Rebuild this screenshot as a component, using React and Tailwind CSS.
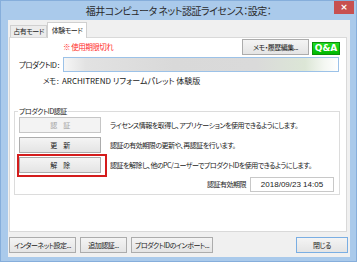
export default function App() {
  const btn =
    "border border-[#acacac] bg-[linear-gradient(#f4f4f4,#e4e4e4)] flex items-center justify-center text-[#1a1a1a]";
  return (
    <div className="w-[357px] h-[262px] bg-[#aacaeb] border border-[#86aedb] flex flex-col font-['Noto_Sans_CJK_JP',sans-serif] [font-feature-settings:'palt'] text-[7px] tracking-[-0.5px] text-[#1a1a1a] leading-none overflow-hidden">
      {/* title bar */}
      <div className="h-[19px] flex items-start shrink-0">
        <div className="flex-1" />
        <div className="text-[10px] tracking-[-0.5px] text-[#2b2b2b] mt-[5px] whitespace-nowrap">
          福井コンピュータ ネット認証ライセンス：設定：
        </div>
        <div className="flex-1 flex justify-end">
          <div className="w-[20px] h-[13px] bg-[#c75050] mr-[2px] flex items-center justify-center text-white text-[9px] tracking-normal font-bold font-['DejaVu_Sans',sans-serif]">
            ×
          </div>
        </div>
      </div>

      {/* client */}
      <div className="ml-[7px] mr-[6px] mb-[4px] flex-1 bg-[#f0f0f0] flex flex-col">
        {/* tabs */}
        <div className="h-[17px] flex items-end pl-[2px] shrink-0">
          <div className="w-[37px] h-[12px] border border-b-0 border-[#d0d0d0] bg-[#ececec] flex items-center justify-center whitespace-nowrap">
            占有モード
          </div>
          <div className="w-[40px] h-[16px] border border-b-0 border-[#d0d0d0] bg-white -mb-[1px] relative z-10 flex items-center justify-center whitespace-nowrap">
            体験モード
          </div>
        </div>

        {/* panel */}
        <div className="ml-[1px] mr-[3px] h-[195px] border border-[#d9d9d9] bg-white flex flex-col">
          {/* row 1 */}
          <div className="flex items-center h-[16px] mt-[1px] pl-[53px] pr-[6px]">
            <span className="text-[#ff2a2a] text-[7.5px]">※ 使用期限切れ</span>
            <div className="ml-auto flex items-center gap-[3px]">
              <div className={`${btn} w-[67px] h-[16px] whitespace-nowrap`}>メモ・履歴編集...</div>
              <div className="w-[28px] h-[13px] mt-[2px] border border-[#0b8f0b] bg-[linear-gradient(#22dd22,#00b800)] text-white font-bold text-[9px] tracking-normal flex items-center justify-center font-['DejaVu_Sans',sans-serif]">
                Q&amp;A
              </div>
            </div>
          </div>

          {/* row 2 */}
          <div className="flex items-center h-[15px] mt-[2px] pl-[9px]">
            <div className="w-[44px] whitespace-nowrap text-[7.5px]">プロダクトID :</div>
            <div className="w-[276px] h-[15px] border border-[#9cc2e8] bg-[linear-gradient(90deg,#f6f6f6_0%,#e2e2e2_8%,#d9d9d9_40%,#dadada_70%,#dce6d6_88%,#f4f7f2_95%,#ffffff_100%)]" />
          </div>

          {/* row 3 */}
          <div className="flex items-center h-[10px] mt-[4px] pl-[33px] whitespace-nowrap">
            <span className="w-[19px] shrink-0 text-[7.5px]">メモ :</span>
            <span className="text-[8px] tracking-normal">ARCHITREND リフォームパレット 体験版</span>
          </div>

          {/* group */}
          <fieldset className="mt-[20px] ml-[4px] w-[326px] border border-[#dcdcdc] pl-[4px] pr-[5px] pb-[2px]">
            <legend className="leading-[10px] px-[1px] -ml-[1px] whitespace-nowrap">プロダクトID認証</legend>
            <div className="flex flex-col gap-[4px] pt-[1px]">
              <div className="flex items-center gap-[9px]">
                <div className="w-[82px] h-[16px] border border-[#c6c6c6] bg-[#f3f3f3] flex items-center justify-center text-[#a3a3a3]">
                  認　証
                </div>
                <span className="whitespace-nowrap">ライセンス情報を取得し、アプリケーションを使用できるようにします。</span>
              </div>
              <div className="flex items-center gap-[9px]">
                <div className={`${btn} w-[82px] h-[16px]`}>更　新</div>
                <span className="whitespace-nowrap">認証の有効期限の更新や、再認証を行います。</span>
              </div>
              <div className="flex items-center gap-[9px]">
                <div className="relative">
                  <div className={`${btn} w-[82px] h-[16px]`}>解　除</div>
                  <div className="absolute -left-[2px] -top-[3px] w-[90px] h-[23px] border-2 border-[#d41c1c]" />
                </div>
                <span className="whitespace-nowrap">認証を解除し、他のPC/ユーザーでプロダクトIDを使用できるようにします。</span>
              </div>
              <div className="flex items-center justify-end gap-[4px] h-[15px]">
                <span className="whitespace-nowrap">認証有効期限</span>
                <div className="w-[84px] h-[15px] border border-[#c8c8c8] bg-white flex items-center justify-center font-['Liberation_Sans',sans-serif] text-[8px] tracking-normal">
                  2018/09/23 14:05
                </div>
              </div>
            </div>
          </fieldset>
        </div>

        {/* bottom buttons */}
        <div className="flex items-center mt-[5px] pl-[1px] pr-[2px] gap-[4px]">
          <div className={`${btn} w-[67px] h-[16px] whitespace-nowrap`}>インターネット設定...</div>
          <div className={`${btn} w-[47px] h-[16px] whitespace-nowrap`}>追加認証...</div>
          <div className={`${btn} w-[82px] h-[16px] whitespace-nowrap`}>プロダクトIDのインポート...</div>
          <div className="ml-auto w-[52px] h-[16px] border border-[#7aaee3] bg-[linear-gradient(#f4f4f4,#e4e4e4)] flex items-center justify-center">
            閉じる
          </div>
        </div>
      </div>
    </div>
  );
}
